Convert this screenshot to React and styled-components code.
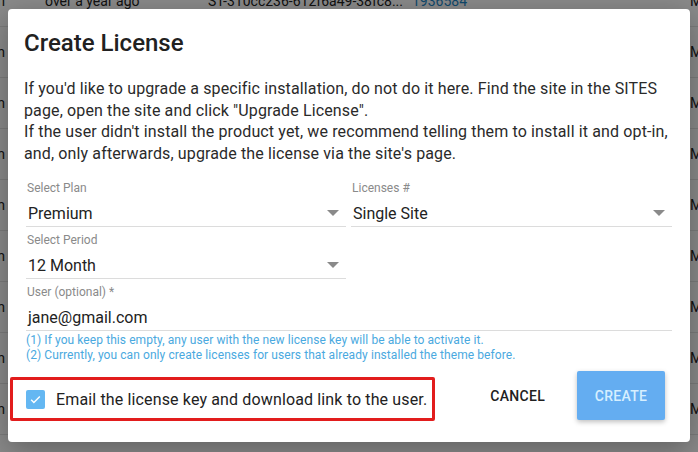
import React from "react";
import styled, { createGlobalStyle } from "styled-components";

const Global = createGlobalStyle`
  html, body { margin: 0; padding: 0; }
  body {
    width: 698px;
    height: 452px;
    overflow: hidden;
    background: #fff;
    font-family: Roboto, "Liberation Sans", sans-serif;
  }
`;

const Page = styled.div`
  position: relative;
  width: 698px;
  height: 452px;
  overflow: hidden;
`;

const Table = styled.div`
  margin-top: -24px;
  display: flex;
  flex-direction: column;
`;

const Row = styled.div`
  display: grid;
  grid-template-columns: 45px 163px 204px 278px 1fr;
  height: 50px;
  align-items: center;
  border-bottom: 1px solid #e6e6e6;
  font-size: 14px;
  color: #222;
  white-space: nowrap;
`;

const Cell = styled.div`
  overflow: hidden;
  color: ${(p) => (p.link ? "#1e88c8" : "inherit")};
  direction: ${(p) => (p.lead ? "rtl" : "ltr")};
  padding-right: ${(p) => (p.lead ? "40px" : "0")};
`;

const Overlay = styled.div`
  position: absolute;
  inset: 0;
  background: rgba(0, 0, 0, 0.46);
`;

const Dialog = styled.div`
  position: absolute;
  left: 8px;
  top: 9px;
  width: 682px;
  height: 433px;
  box-sizing: border-box;
  background: #fff;
  border-radius: 4px;
  box-shadow: 0 8px 30px rgba(0, 0, 0, 0.3);
  padding: 19px 16px 0 16px;
  display: flex;
  flex-direction: column;
`;

const Title = styled.h2`
  margin: 0;
  font-size: 24px;
  font-weight: 500;
  line-height: 30px;
  color: #212121;
`;

const Intro = styled.p`
  margin: 20px 0 0 0;
  font-size: 16px;
  line-height: 21.5px;
  letter-spacing: 0.13px;
  color: #2a2a2a;
`;

const Form = styled.div`
  margin-top: 11px;
  padding: 0 2px;
  display: grid;
  grid-template-columns: 320px 321px;
  column-gap: 5px;
`;

const Field = styled.div`
  grid-column: ${(p) => (p.wide ? "1 / 3" : "auto")};
  display: flex;
  flex-direction: column;
  padding-top: 5px;
`;

const Label = styled.label`
  font-size: 12px;
  line-height: 16px;
  color: #8a8a8a;
  padding-left: 1px;
`;

const Control = styled.div`
  display: flex;
  align-items: center;
  justify-content: space-between;
  height: 26px;
  padding-top: 4px;
  border-bottom: 1px solid #dcdcdc;
  font-size: 16px;
  color: #222;
  padding-left: 2px;
  padding-right: 7px;
`;

const Arrow = styled.span`
  width: 0;
  height: 0;
  border-left: 6px solid transparent;
  border-right: 6px solid transparent;
  border-top: 6px solid #8a8a8a;
`;

const Help = styled.div`
  padding-top: 2px;
  font-size: 12px;
  line-height: 15px;
  letter-spacing: 0.08px;
  color: #4aa9e0;
`;

const Footer = styled.div`
  margin-top: 8px;
  display: flex;
  align-items: flex-start;
  justify-content: space-between;
  padding-right: 9px;
`;

const CheckRow = styled.label`
  margin-left: -14px;
  margin-top: 6px;
  width: 425px;
  height: 44px;
  box-sizing: border-box;
  border: 3px solid #e21d1d;
  border-radius: 2px;
  display: flex;
  align-items: center;
  gap: 11px;
  padding-left: 13px;
  font-size: 16px;
  letter-spacing: 0.14px;
  color: #222;
`;

const Box = styled.span`
  width: 19px;
  height: 19px;
  border-radius: 2px;
  background: #64b7f2;
  display: inline-flex;
  align-items: center;
  justify-content: center;
`;

const Actions = styled.div`
  display: flex;
  align-items: center;
  gap: 32px;
`;

const TextButton = styled.button`
  border: none;
  background: none;
  font-family: inherit;
  font-size: 14px;
  font-weight: 500;
  color: #212121;
  letter-spacing: 0.3px;
  padding: 0;
`;

const PrimaryButton = styled.button`
  width: 88px;
  height: 49px;
  border: none;
  border-radius: 2px;
  background: #64adf1;
  color: #d6efff;
  font-family: inherit;
  font-size: 14px;
  font-weight: 500;
  letter-spacing: 0.3px;
  box-shadow: 0 2px 5px rgba(0, 0, 0, 0.25);
`;

const rows = Array.from({ length: 10 });

export default function App() {
  return (
    <Page>
      <Global />
      <Table>
        {rows.map((_, i) => (
          <Row key={i}>
            <Cell lead>Premium</Cell>
            <Cell>over a year ago</Cell>
            <Cell>ST-310cc236-612f6a49-38fc8...</Cell>
            <Cell link>1936584</Cell>
            <Cell>Monthly</Cell>
          </Row>
        ))}
      </Table>
      <Overlay />
      <Dialog>
        <Title>Create License</Title>
        <Intro>
          If you'd like to upgrade a specific installation, do not do it here. Find the site in the SITES
          page, open the site and click "Upgrade License".
          <br />
          If the user didn't install the product yet, we recommend telling them to install it and opt-in,
          and, only afterwards, upgrade the license via the site's page.
        </Intro>
        <Form>
          <Field>
            <Label>Select Plan</Label>
            <Control>
              Premium
              <Arrow />
            </Control>
          </Field>
          <Field>
            <Label>Licenses #</Label>
            <Control>
              Single Site
              <Arrow />
            </Control>
          </Field>
          <Field>
            <Label>Select Period</Label>
            <Control>
              12 Month
              <Arrow />
            </Control>
          </Field>
          <div />
          <Field wide>
            <Label>User (optional) *</Label>
            <Control>jane@gmail.com</Control>
            <Help>
              (1) If you keep this empty, any user with the new license key will be able to activate it.
              <br />
              (2) Currently, you can only create licenses for users that already installed the theme before.
            </Help>
          </Field>
        </Form>
        <Footer>
          <CheckRow>
            <Box>
              <svg width="13" height="13" viewBox="0 0 24 24">
                <path d="M4 12.5l5 5L20 6.5" fill="none" stroke="#fff" strokeWidth="2.6" />
              </svg>
            </Box>
            Email the license key and download link to the user.
          </CheckRow>
          <Actions>
            <TextButton>CANCEL</TextButton>
            <PrimaryButton>CREATE</PrimaryButton>
          </Actions>
        </Footer>
      </Dialog>
    </Page>
  );
}
